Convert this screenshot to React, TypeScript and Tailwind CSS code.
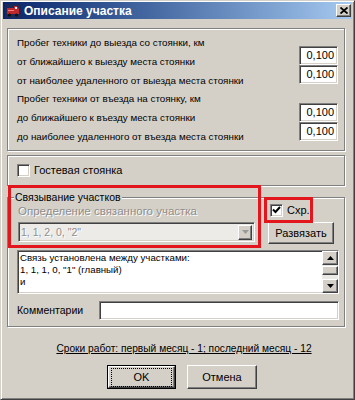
const raised =
  "border border-t-white border-l-white border-r-[#404040] border-b-[#404040] shadow-[inset_-1px_-1px_0_#808080] bg-[#d4d0c8]";
const sunken =
  "border border-t-[#808080] border-l-[#808080] border-r-white border-b-white shadow-[inset_1px_1px_0_#404040,inset_-1px_-1px_0_#d4d0c8]";
const etched = "border border-[#808080] shadow-[inset_1px_1px_0_#fff,1px_1px_0_#fff]";
const grey = "text-[#8e8e8e] [text-shadow:1px_1px_0_#fff]";

const blocks = [
  {
    title: "Пробег техники до выезда со стоянки, км",
    rows: ["от ближайшего к выезду места стоянки", "от наиболее удаленного от выезда места стоянки"],
    pad: "pt-[12px]",
  },
  {
    title: "Пробег техники от въезда на стоянку, км",
    rows: ["до ближайшего к въезду места стоянки", "до наиболее удаленного от въезда места стоянки"],
    pad: "pt-[13px]",
  },
];

function Checkbox({ checked }: { checked?: boolean }) {
  return (
    <span className={`flex h-[13px] w-[13px] shrink-0 items-center justify-center bg-white ${sunken}`}>
      {checked && (
        <svg width="9" height="8" viewBox="0 0 9 8">
          <path d="M1 3.5 L3.5 6 L8 1" fill="none" stroke="#000" strokeWidth="2" />
        </svg>
      )}
    </span>
  );
}

function Arrow({ up, color = "#000" }: { up?: boolean; color?: string }) {
  return (
    <svg width="7" height="4" viewBox="0 0 7 4">
      <path d={up ? "M3.5 0 L7 4 L0 4 Z" : "M0 0 L7 0 L3.5 4 Z"} fill={color} />
    </svg>
  );
}

function Field({ value }: { value: string }) {
  return (
    <div className={`flex h-[19px] w-[39px] items-center justify-end bg-white pr-[3px] text-[11px] ${sunken}`}>
      {value}
    </div>
  );
}

export default function App() {
  return (
    <div className="relative h-[400px] w-[355px] overflow-hidden border border-t-[#d4d0c8] border-l-[#d4d0c8] border-r-[#404040] border-b-[#404040] bg-[#d4d0c8] font-['Liberation_Sans',Arial,sans-serif] text-[11px] leading-none text-black shadow-[inset_1px_1px_0_#fff,inset_-1px_-1px_0_#808080]">
      <div className="mx-[2px] mt-[1px] flex h-[17px] items-center bg-linear-to-r from-[#0a246a] to-[#a6caf0] pl-[2px] pr-[1px]">
        <svg width="16" height="14" viewBox="0 0 16 14">
          <rect x="0" y="0" width="16" height="14" fill="#1c2a5a" />
          <path d="M2 4 h7 v-2 h3 l2 3 v5 h-12 Z" fill="#c0282c" />
          <rect x="10" y="3" width="2" height="2" fill="#e8e8f0" />
          <rect x="3" y="6" width="6" height="1" fill="#f08080" />
          <circle cx="4.5" cy="11" r="1.6" fill="#111" />
          <circle cx="11.5" cy="11" r="1.6" fill="#111" />
        </svg>
        <span className="ml-[3px] text-[12px] font-bold text-white">Описание участка</span>
        <button className={`ml-auto flex h-[13px] w-[15px] items-center justify-center ${raised}`}>
          <svg width="8" height="7" viewBox="0 0 8 7">
            <path d="M0.5 0.5 L7.5 6.5 M7.5 0.5 L0.5 6.5" stroke="#000" strokeWidth="1.8" />
          </svg>
        </button>
      </div>

      <div className="flex flex-col pl-[6px]">
        <section className={`mt-[9px] flex h-[123px] w-[338px] flex-col pt-[5px] pl-[9px] pr-[6px] text-[9.8px] ${etched}`}>
          {blocks.map((block) => (
            <div key={block.title} className="flex h-[56px]">
              <div className="flex flex-1 flex-col">
                <div className="flex h-[18.7px] items-center">{block.title}</div>
                {block.rows.map((row) => (
                  <div key={row} className="flex h-[18.7px] items-center">
                    {row}
                  </div>
                ))}
              </div>
              <div className={`flex flex-col ${block.pad}`}>
                <Field value="0,100" />
                <Field value="0,100" />
              </div>
            </div>
          ))}
        </section>

        <section className={`mt-[4px] flex h-[31px] w-[338px] items-center gap-[4px] pl-[9px] ${etched}`}>
          <Checkbox />
          <span>Гостевая стоянка</span>
        </section>

        <section className={`mt-[11px] flex h-[130px] w-[338px] flex-col pb-[5px] ${etched}`}>
          <div className="-mt-[7px] ml-[6px] h-[13px] self-start bg-[#d4d0c8] px-[1px] text-[10.5px] leading-[13px]">
            Связывание участков
          </div>
          <div className="flex pl-[10px] pr-[10px]">
            <div className="flex w-[237px] flex-col">
              <div className={`flex h-[16px] items-center text-[11.5px] ${grey}`}>Определение связанного участка</div>
              <div className={`mt-[2px] flex h-[20px] items-center bg-[#ecebe7] pl-[2px] pr-[2px] ${sunken}`}>
                <span className={`flex-1 text-[10.5px] ${grey}`}>1, 1, 2, 0, "2"</span>
                <span className={`flex h-[15px] w-[14px] items-center justify-center ${raised}`}>
                  <Arrow color="#9a9a9a" />
                </span>
              </div>
            </div>
            <div className="ml-auto flex w-[66px] flex-col">
              <div className="flex h-[12px] items-center gap-[4px] pl-[2px]">
                <Checkbox checked />
                <span>Схр.</span>
              </div>
              <button className={`mt-[6px] flex h-[22px] items-center justify-center ${raised}`}>Развязать</button>
            </div>
          </div>
          <div className={`mt-[6px] ml-[9px] mr-[5px] flex h-[44px] bg-white ${sunken}`}>
            <div className="flex-1 pt-[1px] pl-[2px] text-[9.7px] leading-[12px]">
              <div>Связь установлена между участками:</div>
              <div>1, 1, 1, 0, "1" (главный)</div>
              <div>и</div>
            </div>
            <div className="flex w-[16px] flex-col bg-[#ebe9e5]">
              <span className={`flex h-[14px] items-center justify-center ${raised}`}>
                <Arrow up />
              </span>
              <span className={`mt-[1px] h-[9px] ${raised}`} />
              <span className={`mt-auto flex h-[14px] items-center justify-center ${raised}`}>
                <Arrow />
              </span>
            </div>
          </div>
          <div className="mt-[7px] ml-[9px] mr-[5px] flex h-[19px] items-center">
            <span className="w-[82px] text-[10.5px]">Комментарии</span>
            <div className={`h-[19px] flex-1 bg-white ${sunken}`} />
          </div>
        </section>

        <div className="mt-[15px] flex h-[14px] w-[338px] items-center justify-center pl-[16px] text-[10.2px] underline">
          Сроки работ: первый месяц - 1; последний месяц - 12
        </div>

        <div className="mt-[9px] flex gap-[11px] pl-[100px]">
          <button className="flex h-[24px] w-[69px] border border-black">
            <span className={`flex flex-1 items-center justify-center ${raised}`}>
              <span className="border border-dotted border-black px-[22px] py-[3px]">OK</span>
            </span>
          </button>
          <button className={`flex h-[24px] w-[70px] items-center justify-center ${raised}`}>Отмена</button>
        </div>
      </div>

      <div className="pointer-events-none absolute left-[7px] top-[184px] h-[63px] w-[253px] border-[3px] border-[#e3161e]" />
      <div className="pointer-events-none absolute left-[263px] top-[196px] h-[26px] w-[49px] border-[3px] border-[#e3161e]" />
    </div>
  );
}
